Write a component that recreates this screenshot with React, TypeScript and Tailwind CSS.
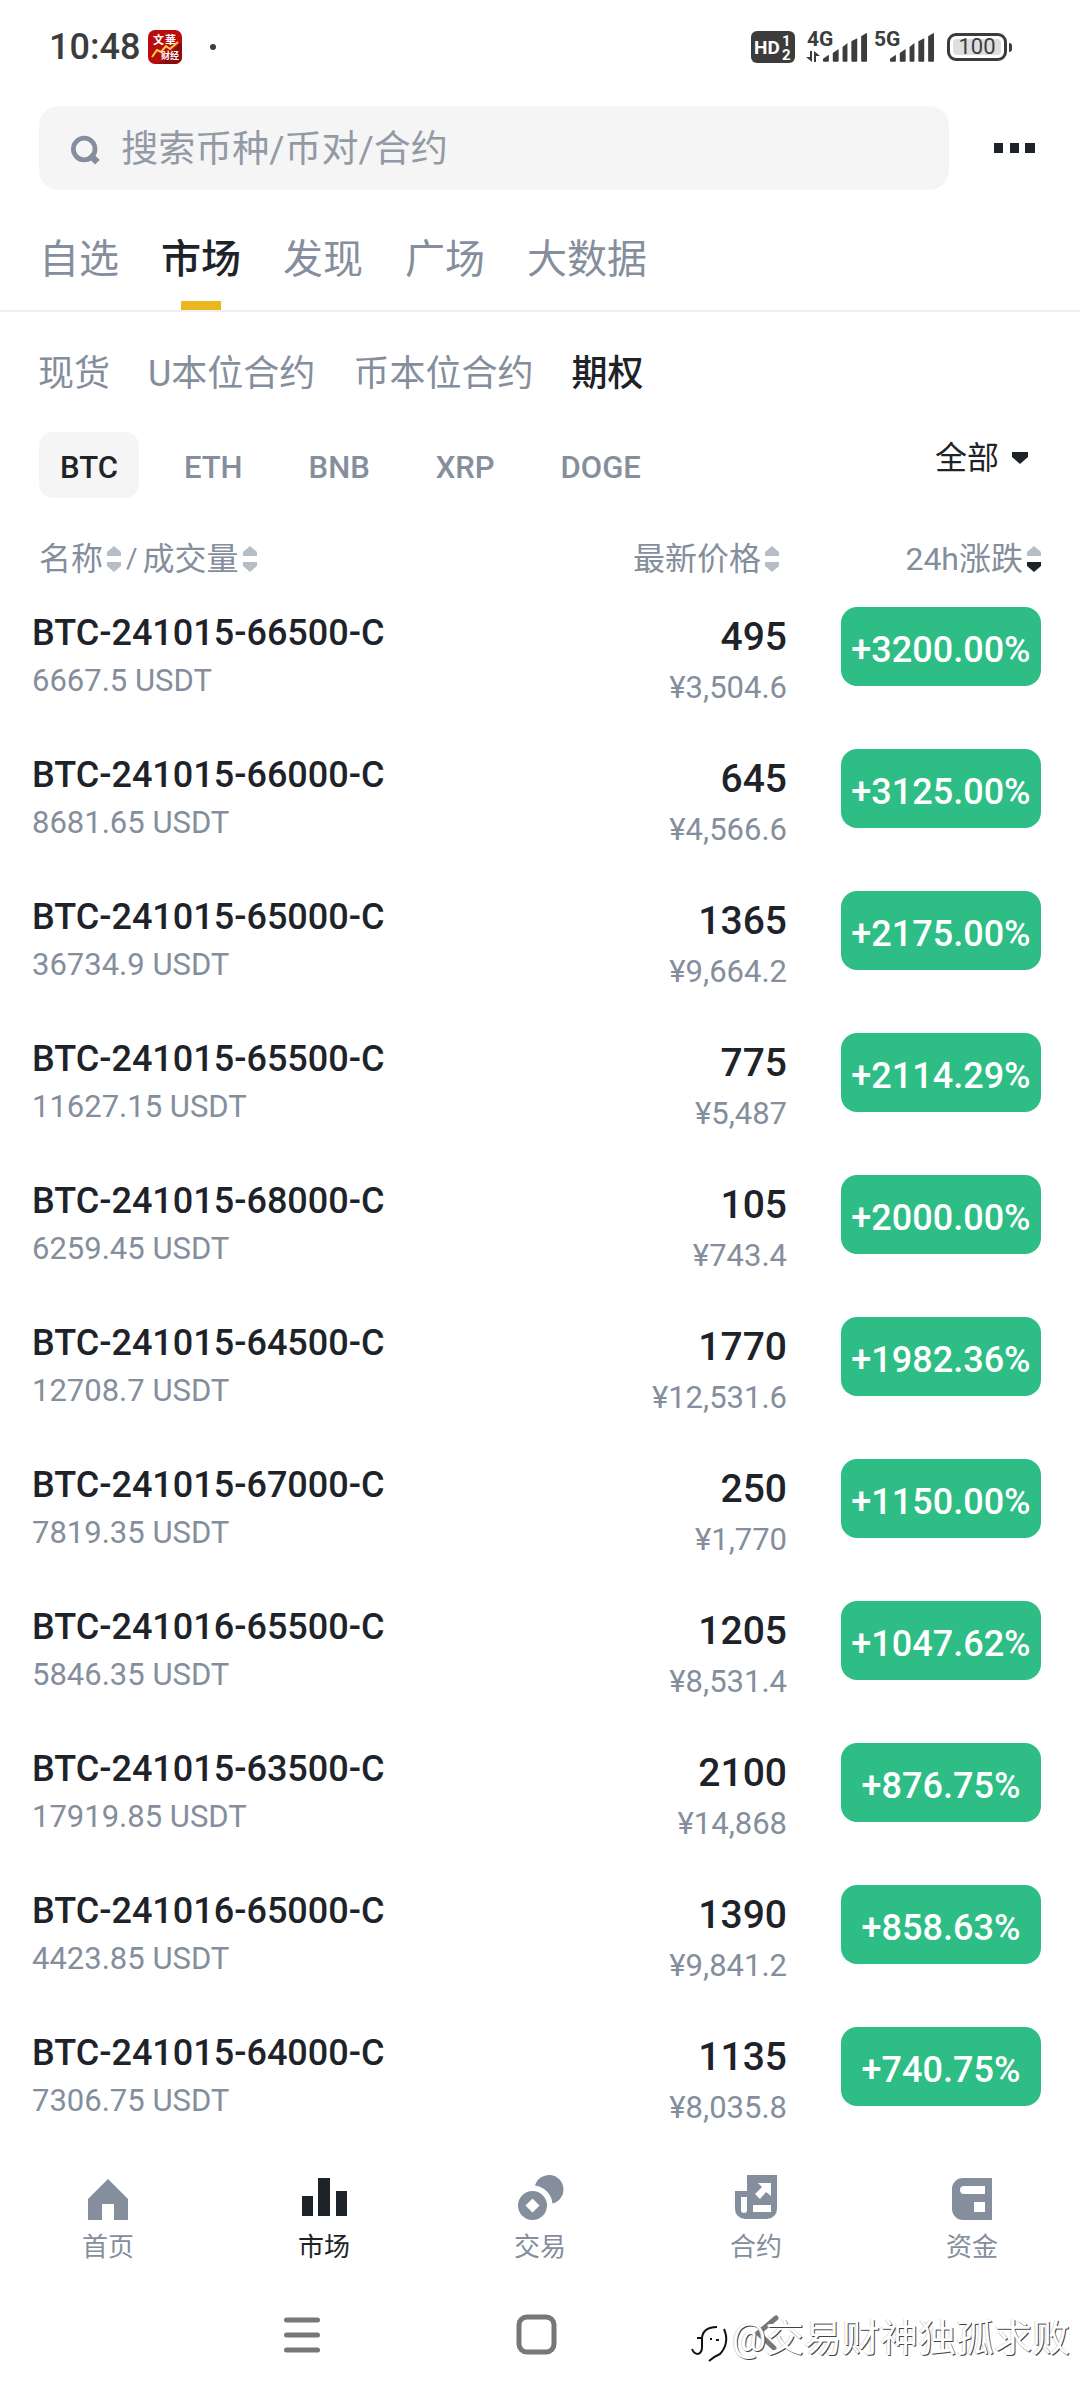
import type { ReactNode } from 'react';

interface Option {
  name: string;
  volume: string;
  price: string;
  cny: string;
  change: string;
}

const OPTIONS: Option[] = [
  { name: 'BTC-241015-66500-C', volume: '6667.5', price: '495', cny: '3,504.6', change: '+3200.00%' },
  { name: 'BTC-241015-66000-C', volume: '8681.65', price: '645', cny: '4,566.6', change: '+3125.00%' },
  { name: 'BTC-241015-65000-C', volume: '36734.9', price: '1365', cny: '9,664.2', change: '+2175.00%' },
  { name: 'BTC-241015-65500-C', volume: '11627.15', price: '775', cny: '5,487', change: '+2114.29%' },
  { name: 'BTC-241015-68000-C', volume: '6259.45', price: '105', cny: '743.4', change: '+2000.00%' },
  { name: 'BTC-241015-64500-C', volume: '12708.7', price: '1770', cny: '12,531.6', change: '+1982.36%' },
  { name: 'BTC-241015-67000-C', volume: '7819.35', price: '250', cny: '1,770', change: '+1150.00%' },
  { name: 'BTC-241016-65500-C', volume: '5846.35', price: '1205', cny: '8,531.4', change: '+1047.62%' },
  { name: 'BTC-241015-63500-C', volume: '17919.85', price: '2100', cny: '14,868', change: '+876.75%' },
  { name: 'BTC-241016-65000-C', volume: '4423.85', price: '1390', cny: '9,841.2', change: '+858.63%' },
  { name: 'BTC-241015-64000-C', volume: '7306.75', price: '1135', cny: '8,035.8', change: '+740.75%' },
];

const TABS = ['自选', '市场', '发现', '广场', '大数据'];
const MARKETS = ['现货', 'U本位合约', '币本位合约', '期权'];
const COINS = ['BTC', 'ETH', 'BNB', 'XRP', 'DOGE'];

function Signal() {
  return (
    <svg width="45" height="30" viewBox="0 0 46 30" fill="currentColor">
      <path d="M0 28V26L6 22V28a1 1 0 0 1-1 1H1a1 1 0 0 1-1-1Z" />
      <path d="M10 28V20l6-4v12a1 1 0 0 1-1 1h-4a1 1 0 0 1-1-1Z" />
      <path d="M20 28V14l5-4v18a1 1 0 0 1-1 1h-3a1 1 0 0 1-1-1Z" />
      <path d="M29 28V8l6-3v23a1 1 0 0 1-1 1h-4a1 1 0 0 1-1-1Z" />
      <path d="M39 28V3l5-3h1v28a1 1 0 0 1-1 1h-4a1 1 0 0 1-1-1Z" />
    </svg>
  );
}

function StatusBar() {
  return (
    <header className="flex h-[94px] items-center justify-between pl-[49px] pr-[68px] text-[#3c3c3c]">
      <div className="flex items-center">
        <span className="text-[36px] font-medium leading-none">10:48</span>
        <svg className="ml-2" width="34" height="34" viewBox="0 0 34 34">
          <rect width="34" height="34" rx="7" fill="#b90d0d" />
          <path d="M10 34L34 12v15a7 7 0 0 1-7 7Z" fill="#8d0a0a" />
          <text x="5" y="14" fontSize="11" fontWeight="700" fill="#fff">文</text>
          <text x="17" y="14" fontSize="11" fontWeight="700" fill="#fff">華</text>
          <path d="M4 27L9 20L13 22L18 16L22 19L30 12" fill="none" stroke="#f7cf4a" strokeWidth="2" />
          <text x="13" y="29" fontSize="9" fontWeight="700" fill="#fff">财经</text>
        </svg>
        <span className="ml-7 size-[6px] rounded-full bg-current" />
      </div>
      <div className="flex items-center">
        <svg width="44" height="32" viewBox="0 0 44 32">
          <rect width="44" height="32" rx="6" fill="#3c3c3c" />
          <g fill="#fff" fontWeight="700">
            <text x="3" y="23" fontSize="19">HD</text>
            <text x="31" y="15" fontSize="15">1</text>
            <text x="31" y="29" fontSize="15">2</text>
          </g>
        </svg>
        <div className="relative ml-7 h-[32px]">
          <span className="absolute -left-[16px] -top-[2px] text-[21px] font-bold leading-none">4G</span>
          <svg className="absolute -left-[17px] bottom-0" width="14" height="12" viewBox="0 0 14 12" fill="currentColor">
            <path d="M4 0H6V11L0 6H4ZM8 11V0L14 5H10V11Z" />
          </svg>
          <div className="pt-[2px]"><Signal /></div>
        </div>
        <div className="relative ml-[22px] h-[32px]">
          <span className="absolute -left-[16px] -top-[2px] text-[21px] font-bold leading-none">5G</span>
          <div className="pt-[2px]"><Signal /></div>
        </div>
        <div className="ml-3 flex items-center gap-[2px]">
          <div className="flex h-[28px] w-[60px] items-center rounded-[9px] border-3 border-current p-[3px]">
            <span className="flex h-full w-full items-center justify-center rounded-[4px] bg-[#dedede] text-[22px] leading-none">
              100
            </span>
          </div>
          <span className="h-[9px] w-[3px] rounded-r-sm bg-current" />
        </div>
      </div>
    </header>
  );
}

function SortIcon({ desc = false }: { desc?: boolean }) {
  return (
    <svg width="14" height="26" viewBox="0 0 14 26" fill="#b7bdc6">
      <path d="M7 0L14 6V10H0V6Z" />
      <path d="M0 16H14V20L7 26L0 20Z" fill={desc ? '#1e2329' : '#b7bdc6'} />
    </svg>
  );
}

function SortButton({ label, desc }: { label: string; desc?: boolean }) {
  return (
    <button className="inline-flex items-center gap-1">
      {label}
      <SortIcon desc={desc} />
    </button>
  );
}

function OptionRow({ item }: { item: Option }) {
  return (
    <tr className="h-[142px] align-top">
      <td className="pl-8 pt-[25px]">
        <div className="text-[36px] font-medium leading-[48px] text-[#1e2329]">{item.name}</div>
        <div className="text-[31px] leading-[48px]">{item.volume} USDT</div>
      </td>
      <td className="pt-[26px] text-right">
        <div className="text-[39px] font-medium leading-[54px] text-[#1e2329]">{item.price}</div>
        <div className="text-[31px] leading-[48px]">¥{item.cny}</div>
      </td>
      <td className="pl-[54px] pr-[39px] pt-[23px]">
        <div className="flex h-[79px] items-center justify-center rounded-2xl bg-[#2ebd85] pt-[6px] text-[36px] font-medium text-white">
          {item.change}
        </div>
      </td>
    </tr>
  );
}

function NavItem({ label, active, children }: { label: string; active?: boolean; children: ReactNode }) {
  return (
    <a href="#" className={active ? 'flex flex-1 flex-col items-center text-[#1e2329]' : 'flex flex-1 flex-col items-center text-[#848e9c]'}>
      <svg width="50" height="50" viewBox="0 0 50 50" fill="currentColor">{children}</svg>
      <span className="mt-[6px] text-[26px] leading-[38px]">{label}</span>
    </a>
  );
}

function BottomNav() {
  return (
    <nav className="flex pt-[26px]">
      <NavItem label="首页">
        <path d="M5 27L25 7L45 27V48H31V32H19V48H5Z" />
      </NavItem>
      <NavItem label="市场" active>
        <path d="M3 24H14V44H3ZM19 6H31V44H19ZM37 19H48V44H37Z" />
      </NavItem>
      <NavItem label="交易">
        <path fillRule="evenodd" d="M17.500 19a14.500 14.500 0 1 0 0 29a14.500 14.500 0 1 0 0-29ZM17.500 26.500L24.500 33.500L17.500 40.500L10.500 33.500Z" />
        <path d="M20 13.500A14.500 14.500 0 1 1 37.500 31.500A20 20 0 0 0 20 13.500Z" />
      </NavItem>
      <NavItem label="合约">
        <path
          fillRule="evenodd"
          d="M16 3H46V37a10 10 0 0 1-10 10H14A10 10 0 0 1 4 37V19H16ZM10 25V38a3 3 0 0 0 6 0V25ZM22 33V40H40V33ZM27 11L31 15L24 22L29 27L35 20L40 24V11Z"
        />
      </NavItem>
      <NavItem label="资金">
        <path
          fillRule="evenodd"
          d="M16 6H45V48H16A11 11 0 0 1 5 37V17A11 11 0 0 1 16 6ZM17 14a4 4 0 0 0 0 8H38V14ZM27 30V40H38V30Z"
        />
      </NavItem>
    </nav>
  );
}

function SystemNav() {
  return (
    <div className="relative mt-1 flex h-[130px] items-center justify-center gap-[186px] pr-2 text-[#777]">
      <button aria-label="menu">
        <svg width="48" height="48" viewBox="0 0 48 48" stroke="currentColor" strokeWidth="5" strokeLinecap="round">
          <path d="M8.500 9H39.500M8.500 24H39.500M8.500 39H39.500" />
        </svg>
      </button>
      <button aria-label="home">
        <svg width="48" height="48" viewBox="0 0 48 48" fill="none" stroke="currentColor" strokeWidth="5">
          <rect x="7" y="6" width="35" height="35" rx="8" />
        </svg>
      </button>
      <button aria-label="back">
        <svg width="48" height="48" viewBox="0 0 48 48" fill="none" stroke="currentColor" strokeWidth="5" strokeLinecap="round">
          <path d="M30 7L12 22L28 37" />
        </svg>
      </button>
      <div className="absolute right-[10px] top-10 flex items-center text-white">
        <svg width="42" height="50" viewBox="0 0 42 50" fill="none" stroke="#111" strokeWidth="2">
          <path d="M2 36Q4 41 8 41M8 41Q12 40 12 34V25H7M12 25Q13 14 27 14M34 16Q40 30 30 41Q25 43 19 48M20 26H22M26 27H29" />
        </svg>
        <span className="text-[38px] leading-[56px] [text-shadow:1px_1px_0_#444,-1px_0_0_#ddd]">@交易财神独孤求败</span>
      </div>
    </div>
  );
}

export default function App() {
  return (
    <div className="min-h-screen w-full bg-white text-[#848e9c] [font-family:Roboto,'Noto_Sans_CJK_SC',sans-serif]">
      <StatusBar />

      <div className="mt-3 flex items-center pl-[39px] pr-[45px]">
        <label className="flex h-[84px] flex-1 items-center rounded-[20px] bg-[#f5f5f5] pl-8 pt-1">
          <svg width="32" height="32" viewBox="0 0 32 32" fill="none" stroke="#848e9c" strokeWidth="5">
            <circle cx="14" cy="15" r="11.500" />
            <path d="M20 21L28 29" strokeWidth="7" />
          </svg>
          <input
            type="text"
            aria-label="搜索"
            placeholder="搜索币种/币对/合约"
            className="ml-5 w-full bg-transparent text-[37px] outline-none placeholder:text-[#929aa5]"
          />
        </label>
        <button aria-label="更多" className="ml-[45px]">
          <svg width="41" height="10" viewBox="0 0 41 10" fill="#1e2329">
            <path d="M0 0H9V10H0ZM16 0H25V10H16ZM31 0H41V10H31Z" />
          </svg>
        </button>
      </div>

      <nav className="mt-[18px] flex h-[104px] gap-[42px] border-b-2 border-[#eeeff1] pl-[39px] text-[40px]">
        {TABS.map(tab => (
          <button key={tab} className={tab === '市场' ? 'relative pt-[2px] font-medium text-[#1e2329]' : 'pt-[2px]'}>
            {tab}
            {tab === '市场' && <span className="absolute bottom-0 left-5 right-5 h-[9px] bg-[#eab71e]" />}
          </button>
        ))}
      </nav>

      <div className="flex h-[120px] gap-[38px] pl-[38px] text-[36px]">
        {MARKETS.map(market => (
          <button key={market} className={market === '期权' ? 'pt-1 font-medium text-[#1e2329]' : 'pt-1'}>
            {market}
          </button>
        ))}
      </div>

      <div className="flex justify-between pl-[39px] pr-[52px]">
        <div className="flex gap-[24px] text-[31px] font-medium">
          {COINS.map(coin => (
            <button
              key={coin}
              className={coin === 'BTC' ? 'h-[66px] rounded-[14px] bg-[#f5f5f5] px-[21px] pt-[6px] text-[#1e2329]' : 'h-[66px] px-[21px] pt-[6px]'}
            >
              {coin}
            </button>
          ))}
        </div>
        <label className="flex h-[52px] items-center gap-3 text-[#1e2329]">
          <select aria-label="到期日" className="appearance-none bg-transparent text-[32px] outline-none">
            <option>全部</option>
          </select>
          <svg width="16" height="12" viewBox="0 0 16 12" fill="currentColor">
            <path d="M0 0H16V5L8 12L0 5Z" />
          </svg>
        </label>
      </div>

      <table className="mt-9 w-full">
        <thead>
          <tr className="h-[50px] text-[32px]">
            <th className="pl-[39px] text-left font-normal">
              <div className="flex items-center gap-[5px] leading-[50px]">
                <SortButton label="名称" />
                <span className="text-[28px]">/</span>
                <SortButton label="成交量" />
              </div>
            </th>
            <th className="pr-2 text-right font-normal leading-[50px]">
              <SortButton label="最新价格" />
            </th>
            <th className="w-[293px] pr-[39px] text-right font-normal leading-[50px]">
              <SortButton label="24h涨跌" desc />
            </th>
          </tr>
        </thead>
        <tbody>
          {OPTIONS.map(item => (
            <OptionRow key={item.name} item={item} />
          ))}
        </tbody>
      </table>

      <BottomNav />
      <SystemNav />
    </div>
  );
}
